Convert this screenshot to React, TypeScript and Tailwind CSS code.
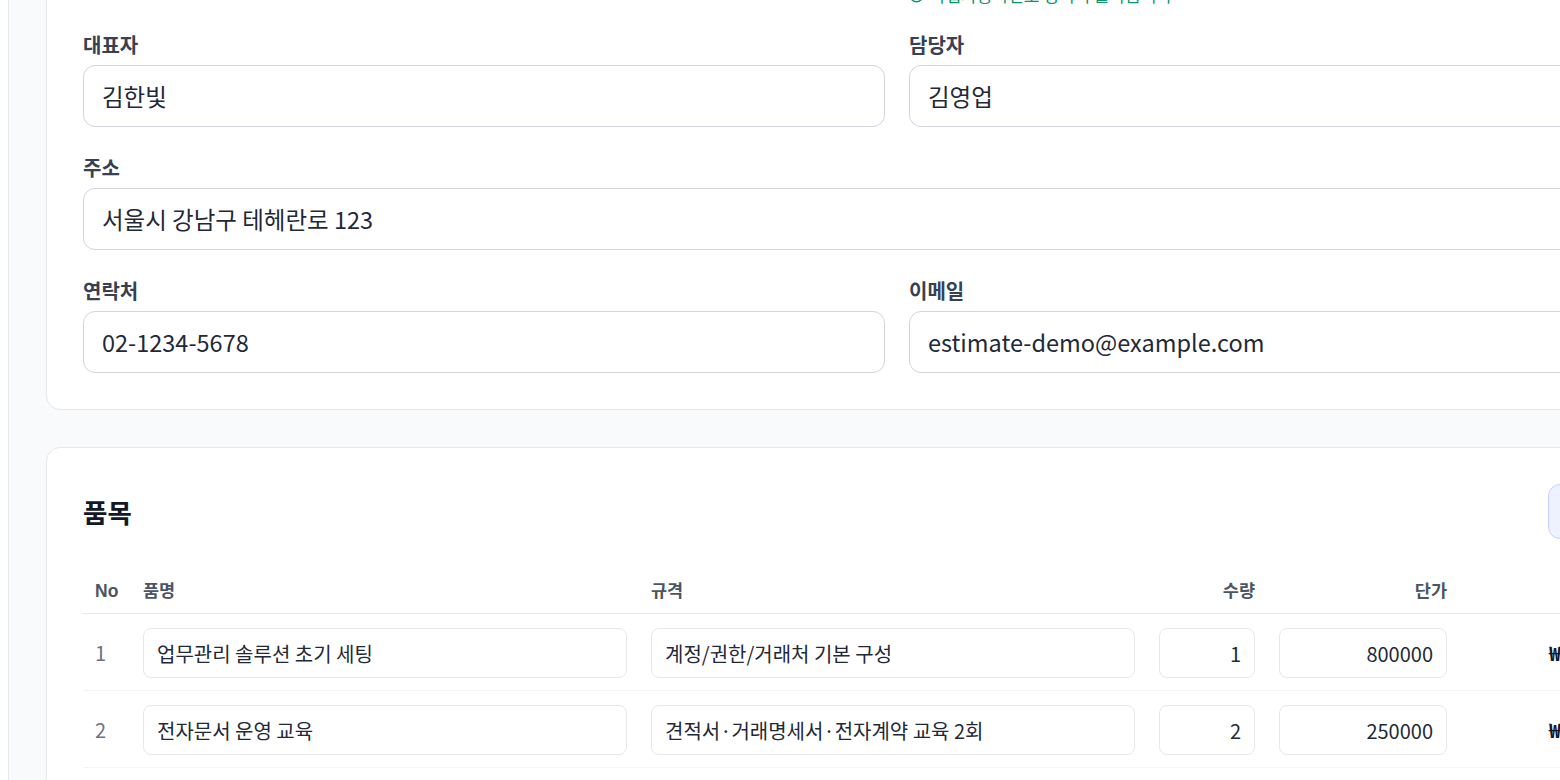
import React from 'react';
import { CheckCircle2 } from 'lucide-react';

interface Item {
  no: number;
  name: string;
  spec: string;
  qty: number;
  price: number;
}

const items: Item[] = [
  { no: 1, name: '업무관리 솔루션 초기 세팅', spec: '계정/권한/거래처 기본 구성', qty: 1, price: 800000 },
  { no: 2, name: '전자문서 운영 교육', spec: '견적서·거래명세서·전자계약 교육 2회', qty: 2, price: 250000 },
];

function Field({ label, value, helper }: { label: string; value: string; helper?: string }) {
  return (
    <div>
      <label className="block text-[20px] leading-[24px] font-semibold text-[#374151] mb-[8px]">{label}</label>
      <input
        readOnly
        value={value}
        className="w-full h-[62px] rounded-[12px] border border-[#d1d5db] bg-white px-[18px] text-[23.5px] text-[#1f2937] outline-none"
      />
      {helper && (
        <p className="mt-[8px] flex items-center gap-[6px] text-[17px] leading-[18px] text-[#059669]">
          <CheckCircle2 className="w-[15px] h-[15px]" strokeWidth={2.2} />
          {helper}
        </p>
      )}
    </div>
  );
}

const cellInput =
  'w-full h-[50px] rounded-[8px] border border-[#e5e7eb] bg-white px-[13px] text-[20px] text-[#1f2937] outline-none';

export default function App() {
  return (
    <div className="w-[1560px] h-[780px] overflow-hidden flex bg-[#f8fafc] font-['Noto_Sans_CJK_KR','Noto_Sans',sans-serif] text-[#1f2937]">
      <div className="w-[9px] shrink-0 bg-white border-r border-[#e5e7eb]" />

      <div className="shrink-0 pl-[37px] -mt-[153px] flex flex-col gap-[37px]">
        {/* 거래처 정보 */}
        <section className="w-[1702px] rounded-[14px] border border-[#e5e7eb] bg-white p-[36px]">
          <div className="grid grid-cols-2 gap-x-[24px] gap-y-[29px]">
            <Field label="상호" value="주식회사 한빛솔루션" />
            <Field label="사업자등록번호" value="123-45-67890" helper="사업자등록번호 형식이 올바릅니다" />
            <Field label="대표자" value="김한빛" />
            <Field label="담당자" value="김영업" />
            <div className="col-span-2">
              <Field label="주소" value="서울시 강남구 테헤란로 123" />
            </div>
            <Field label="연락처" value="02-1234-5678" />
            <Field label="이메일" value="estimate-demo@example.com" />
          </div>
        </section>

        {/* 품목 */}
        <section className="w-[1702px] rounded-[14px] border border-[#e5e7eb] bg-white p-[36px]">
          <div className="flex items-center justify-between h-[55px]">
            <h2 className="text-[26.5px] font-bold text-[#111827]">품목</h2>
            <button className="h-[55px] w-[163px] rounded-[12px] border border-[#c7d2fe] bg-[#eef2ff] text-[18px] font-semibold text-[#4f46e5]">
              + 품목 추가
            </button>
          </div>

          <table className="mt-[26px] w-full table-fixed border-collapse">
            <colgroup>
              <col className="w-[48px]" />
              <col className="w-[508px]" />
              <col className="w-[508px]" />
              <col className="w-[120px]" />
              <col className="w-[192px]" />
              <col className="w-[191px]" />
              <col />
            </colgroup>
            <thead>
              <tr className="border-b border-[#e5e7eb] text-[17.5px] leading-[23px] font-bold text-[#4b5563] font-['Liberation_Sans','Noto_Sans_CJK_KR',sans-serif]">
                <th className="px-3 pt-[15px] pb-[10px] text-left">No</th>
                <th className="px-3 pt-[15px] pb-[10px] text-left">품명</th>
                <th className="px-3 pt-[15px] pb-[10px] text-left">규격</th>
                <th className="px-3 pt-[15px] pb-[10px] text-right">수량</th>
                <th className="px-3 pt-[15px] pb-[10px] text-right">단가</th>
                <th className="px-3 pt-[15px] pb-[10px] text-right">금액</th>
                <th className="px-3 pt-[15px] pb-[10px]" />
              </tr>
            </thead>
            <tbody>
              {items.map((item) => (
                <tr key={item.no} className="border-b border-[#f1f5f9]">
                  <td className="px-3 pt-[14px] pb-[12px] text-[20px] text-[#6b7280]">{item.no}</td>
                  <td className="px-3 pt-[14px] pb-[12px]">
                    <input readOnly value={item.name} className={cellInput} />
                  </td>
                  <td className="px-3 pt-[14px] pb-[12px]">
                    <input readOnly value={item.spec} className={cellInput} />
                  </td>
                  <td className="px-3 pt-[14px] pb-[12px]">
                    <input readOnly value={item.qty} className={`${cellInput} text-right`} />
                  </td>
                  <td className="px-3 pt-[14px] pb-[12px]">
                    <input readOnly value={item.price} className={`${cellInput} text-right`} />
                  </td>
                  <td className="px-3 pt-[14px] pb-[12px] text-right text-[20px] font-semibold text-[#111827]">
                    ₩{(item.qty * item.price).toLocaleString('ko-KR')}
                  </td>
                  <td className="px-3 pt-[14px] pb-[12px] text-center text-[16px] text-[#9ca3af]">삭제</td>
                </tr>
              ))}
            </tbody>
          </table>
        </section>
      </div>
    </div>
  );
}
